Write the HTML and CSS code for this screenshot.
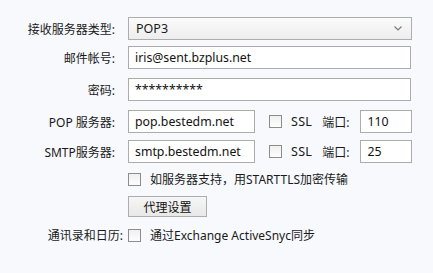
FILE: index.html
```html
<!DOCTYPE html>
<html lang="zh-CN">
<head>
    <meta charset="UTF-8">
    <title>账户设置</title>
    <link rel="stylesheet" href="styles.css">
</head>
<body>
    <div class="form">
        <div class="row r1">
            <span class="lbl">接收服务器类型:</span>
            <div class="select">
                <span>POP3</span>
                <svg class="chev" width="8" height="5" viewBox="0 0 8 5"><path d="M0.5 0.5 L4 4 L7.5 0.5" fill="none" stroke="#7a7a7a" stroke-width="1.2"/></svg>
            </div>
        </div>
        <div class="row r2">
            <span class="lbl">邮件帐号:</span>
            <input class="field wide" type="text" value="iris@sent.bzplus.net">
        </div>
        <div class="row r3">
            <span class="lbl">密码:</span>
            <input class="field wide" type="text" value="**********">
        </div>
        <div class="row r4">
            <span class="lbl">POP 服务器:</span>
            <input class="field host" type="text" value="pop.bestedm.net">
            <span class="box"></span>
            <span class="ssl">SSL</span>
            <span class="port-lbl">端口:</span>
            <input class="field port" type="text" value="110">
        </div>
        <div class="row r5">
            <span class="lbl">SMTP服务器:</span>
            <input class="field host" type="text" value="smtp.bestedm.net">
            <span class="box"></span>
            <span class="ssl">SSL</span>
            <span class="port-lbl">端口:</span>
            <input class="field port" type="text" value="25">
        </div>
        <div class="row r6">
            <span class="lbl"></span>
            <span class="box"></span>
            <span class="opt">如服务器支持，用STARTTLS加密传输</span>
        </div>
        <div class="row r7">
            <span class="lbl"></span>
            <button class="btn">代理设置</button>
        </div>
        <div class="row r8">
            <span class="lbl">通讯录和日历:</span>
            <span class="box"></span>
            <span class="opt">通过Exchange ActiveSnyc同步</span>
        </div>
    </div>
</body>
</html>
```

FILE: styles.css
```css
body {
    margin: 0;
    background-color: #f7f9fd;
    font-family: "Noto Sans", "Noto Sans CJK SC", sans-serif;
    font-size: 12px;
    color: #1a1a1a;
}

.form {
    padding-top: 17px;
}

.row {
    display: flex;
    align-items: center;
}

.lbl {
    width: 115px;
    margin-right: 13px;
    text-align: right;
    white-space: nowrap;
}

.r1 { height: 23px; }
.r2 { height: 23px; margin-top: 6px; }
.r3 { height: 23px; margin-top: 9px; }
.r4 { height: 23px; margin-top: 9px; }
.r5 { height: 23px; margin-top: 7px; }
.r6 { height: 18px; margin-top: 7px; }
.r7 { height: 21px; margin-top: 8px; }
.r8 { height: 18px; margin-top: 9px; }

.r8 .lbl {
    width: 123px;
    margin-right: 5px;
}

.select {
    box-sizing: border-box;
    width: 284px;
    height: 23px;
    border: 1px solid #adadad;
    background: linear-gradient(#fbfbfb, #ededed);
    display: flex;
    align-items: center;
    justify-content: space-between;
    padding: 0 7px 0 7px;
    font-size: 12.5px;
}

.chev {
    margin-right: 2px;
}

.field {
    box-sizing: border-box;
    height: 23px;
    border: 1px solid #acacac;
    background-color: #ffffff;
    padding: 0 6px;
    font-family: inherit;
    font-size: 12.3px;
    color: #111;
    outline: none;
}

.wide {
    width: 283px;
}

.host {
    width: 127px;
}

.port {
    width: 52px;
}

.box {
    box-sizing: border-box;
    width: 13px;
    height: 13px;
    border: 1px solid #8c8c8c;
    background: linear-gradient(#f0f0f0, #fdfdfd);
    flex-shrink: 0;
}

.host + .box {
    margin-left: 14px;
}

.ssl {
    margin-left: 9px;
    font-size: 12.5px;
    letter-spacing: 0.3px;
}

.port-lbl {
    margin-left: 10px;
    margin-right: 11px;
}

.opt {
    margin-left: 9px;
}

.btn {
    box-sizing: border-box;
    width: 79px;
    height: 21px;
    border: 1px solid #adadad;
    background: linear-gradient(#f6f6f6, #e8e8e8);
    font-family: inherit;
    font-size: 12px;
    color: #111;
    padding: 0;
}
```
